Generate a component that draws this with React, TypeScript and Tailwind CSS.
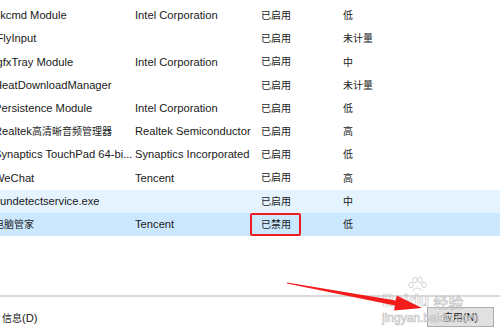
import React from "react";

const CJK = /[\u3000-\u9fff\uff00-\uffef]/;

function T({ s }: { s: string }) {
  const parts: { t: string; c: boolean }[] = [];
  for (const ch of s) {
    const c = CJK.test(ch);
    const last = parts[parts.length - 1];
    if (last && last.c === c) last.t += ch;
    else parts.push({ t: ch, c });
  }
  return (
    <>
      {parts.map((p, i) =>
        p.c ? (
          <span key={i} className="text-[10px]">
            {p.t}
          </span>
        ) : (
          <span key={i}>{p.t}</span>
        )
      )}
    </>
  );
}

type Row = { name: string; pub: string; status: string; impact: string; bg?: string; boxed?: boolean };

const rows: Row[] = [
  { name: "hkcmd Module", pub: "Intel Corporation", status: "已启用", impact: "低" },
  { name: "iFlyInput", pub: "", status: "已启用", impact: "未计量" },
  { name: "igfxTray Module", pub: "Intel Corporation", status: "已启用", impact: "中" },
  { name: "HeatDownloadManager", pub: "", status: "已启用", impact: "未计量" },
  { name: "Persistence Module", pub: "Intel Corporation", status: "已启用", impact: "低" },
  { name: "Realtek高清晰音频管理器", pub: "Realtek Semiconductor", status: "已启用", impact: "高" },
  { name: "Synaptics TouchPad 64-bi...", pub: "Synaptics Incorporated", status: "已启用", impact: "低" },
  { name: "WeChat", pub: "Tencent", status: "已启用", impact: "高" },
  { name: "ixundetectservice.exe", pub: "", status: "已启用", impact: "中", bg: "hover" },
  { name: "电脑管家", pub: "Tencent", status: "已禁用", impact: "低", bg: "sel", boxed: true },
];

export default function App() {
  return (
    <div
      className="relative flex h-[333px] w-[500px] flex-col overflow-hidden bg-white text-[11.2px] text-[#1a1a1a]"
      style={{ fontFamily: '"Liberation Sans", "Noto Sans CJK SC", sans-serif' }}
    >
      <div className="flex flex-col pt-[4px]">
        {rows.map((r, i) => (
          <div
            key={i}
            className={
              "flex h-[23.2px] items-center " +
              (r.bg === "hover" ? "bg-[#e5f3ff]" : r.bg === "sel" ? "bg-[#cce8ff]" : "")
            }
          >
            <div className="w-[135px] overflow-hidden">
              <div className={"whitespace-nowrap " + (r.name.startsWith("ix") ? "-ml-[8px]" : "-ml-[6px]")}>
                <T s={r.name} />
              </div>
            </div>
            <div className="w-[126px] whitespace-nowrap">{r.pub}</div>
            <div className="relative flex h-full w-[82px] items-center">
              <T s={r.status} />
              {r.boxed && (
                <div className="absolute left-[-11px] top-[0px] h-[23px] w-[51px] rounded-[2px] border-2 border-[#ee1c24]" />
              )}
            </div>
            <div className="flex-1">
              <T s={r.impact} />
            </div>
          </div>
        ))}
      </div>
      <div className="flex-1" />
      <div className="h-[2px] bg-[#d9d9d9]" />
      <div className="flex h-[36px] items-start justify-between">
        <div className="pl-[2px] pt-[13px]">
          <T s="信息(D)" />
        </div>
        <button className="mr-[6px] mt-[10px] flex h-[20px] w-[67px] items-center justify-center border border-[#adadad] bg-[#e1e1e1] text-[11px] text-[#1a1a1a]">
          <T s="应用(N)" />
        </button>
      </div>

      {/* watermark */}
      <div className="pointer-events-none absolute left-[382px] top-[292px] text-transparent [-webkit-text-stroke:0.7px_#c6c6c6]">
        <div className="relative flex items-end">
          <span className="text-[17px] font-bold leading-none">Bai</span>
          <span className="relative text-[17px] font-bold leading-none">
            du
            <svg className="absolute left-[-2px] top-[-16px]" width="22" height="16" viewBox="0 0 22 16" fill="none" stroke="#c8c8c8" strokeWidth="0.8">
              <ellipse cx="5" cy="9" rx="2.2" ry="2.8" />
              <ellipse cx="9" cy="4" rx="2.2" ry="2.8" />
              <ellipse cx="14" cy="4" rx="2.2" ry="2.8" />
              <ellipse cx="18" cy="9" rx="2.2" ry="2.8" />
              <path d="M7 15 C8 11 14 11 16 15" />
            </svg>
          </span>
          <span className="ml-[4px] text-[15px] leading-none" style={{ fontFamily: '"Noto Sans CJK SC", sans-serif' }}>
            经验
          </span>
        </div>
        <div className="mt-[3px] text-[12px] leading-none">jingyan.baidu.com</div>
      </div>

      {/* red arrow */}
      <svg className="pointer-events-none absolute left-0 top-0" width="500" height="333">
        <polygon
          points="286.9,283.5 394.9,305.5 394.1,310.4 422,308 396.7,295.6 395.9,300.5 287.1,282.5"
          fill="#f21c1c"
        />
      </svg>
    </div>
  );
}
